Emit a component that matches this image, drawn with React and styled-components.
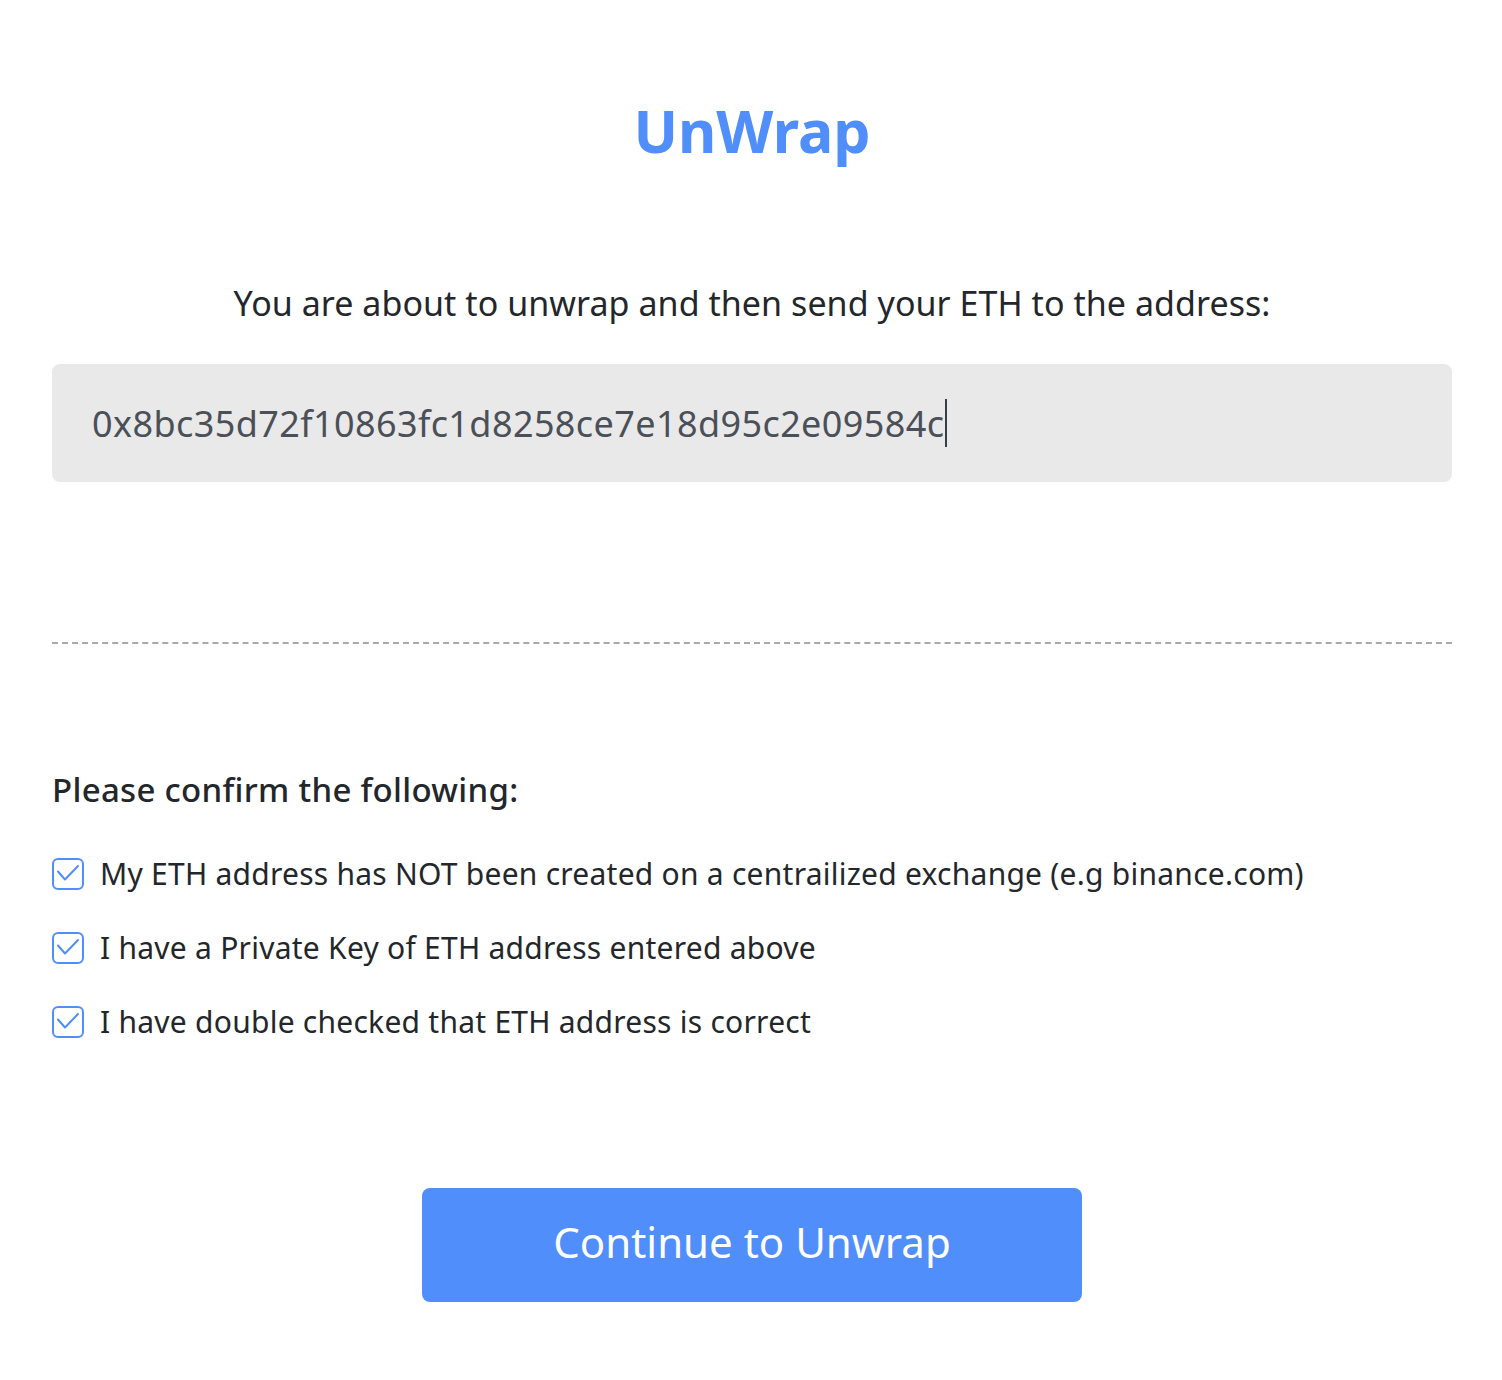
import React from 'react'
import styled, {createGlobalStyle} from 'styled-components'

const blue = '#508efc'

const Global = createGlobalStyle`
    body {
        margin: 0;
        background: #fff;
        font-family: "Noto Sans", "Open Sans", sans-serif;
        color: #23272b;
    }
`

const Page = styled.div`
    width: 1400px;
    margin: 0 50px 0 52px;
    padding-top: 94px;
    padding-bottom: 78px;
    display: flex;
    flex-direction: column;
`

const Title = styled.h1`
    margin: 0;
    text-align: center;
    font-size: 59px;
    line-height: 72px;
    font-weight: 700;
    color: ${blue};
`

const Lead = styled.p`
    margin: 117px 0 0;
    text-align: center;
    font-size: 34px;
    line-height: 40px;
    letter-spacing: 0.05px;
`

const AddressBox = styled.div`
    margin-top: 41px;
    height: 118px;
    box-sizing: border-box;
    padding: 0 40px;
    display: flex;
    align-items: center;
    background: #e9e9e9;
    border-radius: 8px;
    font-size: 36px;
    letter-spacing: 0.4px;
    color: #4b5058;
`

const Caret = styled.span`
    display: inline-block;
    width: 2px;
    height: 48px;
    margin-left: 1px;
    background: #3a3f45;
    vertical-align: middle;
`

const Divider = styled.hr`
    margin: 160px 0 0;
    border: 0;
    border-top: 2px dashed #a9a9ab;
`

const Heading = styled.h2`
    margin: 126px 0 0;
    font-size: 33px;
    line-height: 40px;
    font-weight: 500;
    letter-spacing: 0.3px;
`

const List = styled.div`
    margin-top: 44px;
    display: flex;
    flex-direction: column;
    gap: 34px;
`

const Item = styled.label`
    display: flex;
    align-items: center;
    gap: 16px;
    font-size: 30px;
    line-height: 40px;
    letter-spacing: 0.25px;
`

const Box = styled.span`
    width: 32px;
    height: 32px;
    box-sizing: border-box;
    border: 2px solid ${blue};
    border-radius: 6px;
    display: flex;
    align-items: center;
    justify-content: center;
    flex-shrink: 0;
`

const Button = styled.button`
    margin: 146px auto 0;
    width: 660px;
    height: 114px;
    padding: 0 0 8px;
    border: 0;
    border-radius: 8px;
    background: ${blue};
    color: #fff;
    font-family: "Noto Sans", sans-serif;
    font-size: 42px;
    cursor: pointer;
`

const Check = ({label}) => (
    <Item>
        <Box>
            <svg width="28" height="28" viewBox="0 0 28 28">
                <polyline points="4,11.5 11,19.5 24,6" fill="none" stroke={blue} strokeWidth="2" strokeLinecap="round" strokeLinejoin="round" />
            </svg>
        </Box>
        {label}
    </Item>
)

export default function App() {
    return (
        <Page>
            <Global />
            <Title>UnWrap</Title>
            <Lead>You are about to unwrap and then send your ETH to the address:</Lead>
            <AddressBox>
                0x8bc35d72f10863fc1d8258ce7e18d95c2e09584c<Caret />
            </AddressBox>
            <Divider />
            <Heading>Please confirm the following:</Heading>
            <List>
                <Check label="My ETH address has NOT been created on a centrailized exchange (e.g binance.com)" />
                <Check label="I have a Private Key of ETH address entered above" />
                <Check label="I have double checked that ETH address is correct" />
            </List>
            <Button>Continue to Unwrap</Button>
        </Page>
    )
}
